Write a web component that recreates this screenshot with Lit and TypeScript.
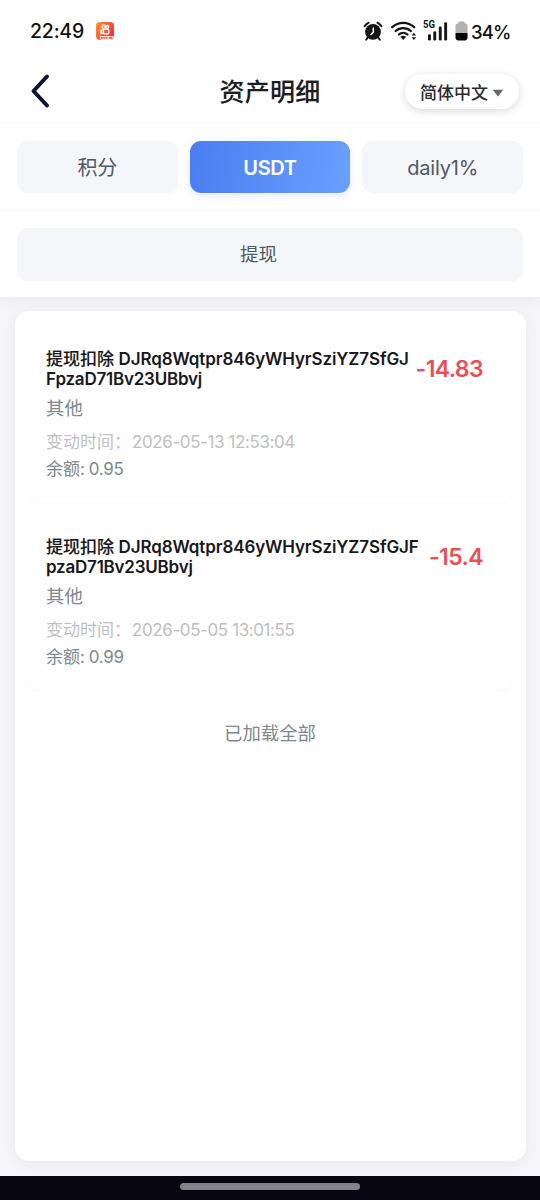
import { LitElement, html, css, svg } from "lit";
import { customElement, property, state } from "lit/decorators.js";

interface Entry {
  label: string;
  lines: string[];
  amount: string;
  kind: string;
  time: string;
  balance: string;
}

const ENTRIES: Entry[] = [
  {
    label: "提现扣除",
    lines: ["DJRq8Wqtpr846yWHyrSziYZ7SfGJ", "FpzaD71Bv23UBbvj"],
    amount: "-14.83",
    kind: "其他",
    time: "2026-05-13 12:53:04",
    balance: "0.95",
  },
  {
    label: "提现扣除",
    lines: ["DJRq8Wqtpr846yWHyrSziYZ7SfGJF", "pzaD71Bv23UBbvj"],
    amount: "-15.4",
    kind: "其他",
    time: "2026-05-05 13:01:55",
    balance: "0.99",
  },
];

@customElement("status-bar")
class StatusBar extends LitElement {
  static styles = css`
    :host { display: flex; align-items: center; height: 60px; padding: 2px 30px 0; box-sizing: border-box; color: #111; }
    .clock { font-size: 19.5px; font-weight: 500; letter-spacing: -0.2px; line-height: 24px; width: 66px; white-space: nowrap; }
    .grow { flex: 1; }
    svg { display: block; flex: none; }
    .alarm { margin-right: 8px; }
    .wifi { margin-right: 6px; }
    .signal { margin-right: 7px; }
    .battery { margin-right: 3px; }
    .pct { font-size: 18.5px; font-weight: 500; line-height: 24px; width: 39px; padding-top: 1px; white-space: nowrap; letter-spacing: -0.9px; }
    .gen { font: 700 10px "Roboto", sans-serif; }
  `;

  render() {
    return html`
      <span class="clock">22:49</span>
      <svg width="18" height="18" viewBox="0 0 18 18">
        <defs>
          <linearGradient id="app" x1="0" y1="0" x2="1" y2="0.6">
            <stop offset="0" stop-color="#ff9430" /><stop offset="1" stop-color="#f0353c" />
          </linearGradient>
        </defs>
        <rect width="18" height="18" rx="4" fill="url(#app)" />
        <g fill="none" stroke="#fff" stroke-width="1.3">
          <circle cx="7.6" cy="4.6" r="1.7" /><circle cx="11.2" cy="4.9" r="1.4" />
          <rect x="7.4" y="7.4" width="5.4" height="4.6" rx="1.4" />
          <path d="M7.2 8.6 5 7.9v3.6l2.2-.7" />
        </g>
        <path d="M4 14h13.6v1.2L15.4 18H4.6z" fill="#ffe9e2" />
        <path d="M5 16h7.4M13.6 15.2l.8 1.6 1.8-2.2" stroke="#e84a43" stroke-width="1.7" stroke-dasharray="1.7 .5" fill="none" />
      </svg>
      <span class="grow"></span>
      <svg class="alarm" width="20" height="20" viewBox="0 0 20 20">
        <circle cx="10" cy="10.8" r="7.9" fill="#151515" />
        <path d="M1.6 5.2A12 12 0 0 1 5.6 1.7M18.4 5.2a12 12 0 0 0-4-3.5" stroke="#151515" stroke-width="2" stroke-linecap="round" fill="none" />
        <path d="m4.8 16.4-1.6 2.3M15.2 16.4l1.6 2.3" stroke="#151515" stroke-width="1.9" stroke-linecap="round" />
        <path d="M10.3 6.9v4.4L8 13.5" stroke="#fff" stroke-width="1.5" stroke-linecap="round" fill="none" />
      </svg>
      <svg class="wifi" width="26" height="20" viewBox="0 0 26 20">
        <g fill="none" stroke="#151515" stroke-width="2.3" stroke-linecap="round">
          <path d="M1.2 6.2a16 16 0 0 1 22 0" /><path d="M4.6 10a11.4 11.4 0 0 1 15.2 0" /><path d="M7.9 13.5a6.6 6.6 0 0 1 8.6 0" />
        </g>
        <path d="M9.3 15.8q2.9-2 5.8 0l-2.9 3.2z" fill="#151515" />
        <path d="m20.6 14.5 2.3-2.7 2.3 2.7zM20.6 16.2l2.3 2.7 2.3-2.7z" fill="#151515" />
      </svg>
      <svg class="signal" width="25" height="22" viewBox="0 0 25 22">
        <text class="gen" x="0" y="8.4" fill="#151515" textLength="12" lengthAdjust="spacingAndGlyphs">5G</text>
        <g fill="#151515">
          <rect x="5" y="14.2" width="2.9" height="6.2" rx="1.2" /><rect x="10.3" y="11.2" width="2.9" height="9.2" rx="1.2" />
          <rect x="15.8" y="6.6" width="2.9" height="13.8" rx="1.2" /><rect x="21.2" y="2.2" width="2.9" height="18.2" rx="1.2" />
        </g>
      </svg>
      <svg class="battery" width="13" height="20" viewBox="0 0 13 20">
        <path d="M3.4 2.2V1.5Q3.4.6 4.6.6h3.8q1.2 0 1.2.9v.7q2.9 0 2.9 2.9V12H.5V5.1q0-2.9 2.9-2.9z" fill="#b1b1b1" />
        <path d="M.5 12h12v4.6q0 2.8-2.8 2.8H3.3q-2.8 0-2.8-2.8z" fill="#050505" />
      </svg>
      <span class="pct">34%</span>
    `;
  }
}

@customElement("record-item")
class RecordItem extends LitElement {
  @property({ attribute: false }) entry!: Entry;

  static styles = css`
    :host { display: block; box-sizing: border-box; height: 175px; padding: 22px 29px 22px 18px; border-radius: 12px; background: #fff; box-shadow: 0 2px 4px rgba(0, 0, 0, 0.025); white-space: nowrap; }
    .top { display: flex; justify-content: space-between; align-items: center; height: 40px; }
    .name { font-size: 17px; line-height: 20px; font-weight: 500; color: #18181c; }
    .cjk { font-weight: 500; -webkit-text-stroke: 0.1px #18181c; }
    .code { font-weight: 600; letter-spacing: -0.11px; }
    .rest { letter-spacing: -0.22px; }
    .amount { font-size: 23px; font-weight: 600; line-height: 28px; color: #e95055; letter-spacing: -0.6px; }
    .kind { margin-top: 7px; font-size: 18.4px; line-height: 24px; color: #7d898e; }
    .time { margin-top: 11px; font-size: 17px; line-height: 22px; color: #bfbfbf; }
    .date { letter-spacing: -0.4px; margin-left: 1px; }
    .balance { margin-top: 5px; font-size: 17px; line-height: 22px; color: #7d898e; }
    .sum { letter-spacing: -0.3px; margin-left: -1px; }
  `;

  render() {
    const e = this.entry;
    return html`
      <div class="top">
        <div class="name">
          <span class="cjk">${e.label}</span> <span class="code">${e.lines[0]}<br /><span class="rest">${e.lines[1]}</span></span>
        </div>
        <div class="amount">${e.amount}</div>
      </div>
      <div class="kind">${e.kind}</div>
      <div class="time">变动时间：<span class="date">${e.time}</span></div>
      <div class="balance">余额: <span class="sum">${e.balance}</span></div>
    `;
  }
}

@customElement("app-root")
class AppRoot extends LitElement {
  @state() private active = 1;
  private tabs = ["积分", "USDT", "daily1%"];

  static styles = css`
    :host { display: flex; flex-direction: column; width: 540px; height: 1200px; overflow: hidden; background: #f5f5fa; font-family: "Inter", "Noto Sans CJK SC", sans-serif; font-variant-ligatures: none; }
    .panel { background: #fff; box-shadow: 0 3px 12px rgba(20, 20, 50, 0.06); height: 297px; flex: none; }
    .header { display: grid; grid-template-columns: 135px 1fr 135px; align-items: center; height: 64px; padding: 0 0 1px; box-sizing: border-box; border-bottom: 1px solid #f6f6f6; }
    .back { display: block; margin-left: 29px; }
    .title { text-align: center; font-size: 25px; line-height: 36px; padding-top: 2px; font-weight: 500; color: #1b1c22; letter-spacing: 0.3px; -webkit-text-stroke: 0.1px #1b1c22; }
    .lang { display: flex; align-items: center; gap: 4px; width: 114px; height: 35px; margin-top: 1px; box-sizing: border-box; padding: 1px 0 0 15px; border: 0; border-radius: 18px; background: #fff; box-shadow: 0 2px 8px rgba(0, 0, 0, 0.15); font: 500 17px/24px "Noto Sans CJK SC", sans-serif; color: #292929; white-space: nowrap; }
    .tabs { display: grid; grid-template-columns: repeat(3, 1fr); gap: 12px; padding: 17px 17px; border-bottom: 1px solid #f8f8f8; }
    .tab { display: flex; align-items: center; justify-content: center; height: 52px; border: 0; border-radius: 11px; padding: 1px 0 0; background: #f5f6fa; font: 400 20px/28px "Inter", "Noto Sans CJK SC", sans-serif; color: #4c5963; letter-spacing: -0.2px; }
    .active { background: linear-gradient(100deg, #4a7df0, #6aa0ff); color: #fff; font-weight: 600; letter-spacing: -0.3px; box-shadow: 0 3px 8px rgba(74, 125, 240, 0.15); }
    .sub { padding: 17px; }
    .filter { display: flex; align-items: center; justify-content: center; height: 53px; border-radius: 11px; background: #f5f6fa; font-size: 18.5px; line-height: 26px; color: #4c5963; box-sizing: border-box; padding: 0 23px 1px 0; }
    .card { margin: 14px 14px 15px 15px; flex: 1; box-sizing: border-box; padding: 16px 14px 0 13px; border-radius: 14px; background: #fff; box-shadow: 0 3px 14px rgba(20, 20, 50, 0.055); }
    .list { display: flex; flex-direction: column; gap: 13px; }
    .end { margin-top: 29px; text-align: center; font-size: 18.4px; line-height: 28px; color: #7d898e; }
    .nav { display: flex; justify-content: center; align-items: flex-start; height: 24px; padding-top: 7px; box-sizing: border-box; background: #070612; flex: none; }
    .pill { width: 180px; height: 7px; border-radius: 4px; background: #848288; }
  `;

  render() {
    return html`
      <section class="panel">
        <status-bar></status-bar>
        <header class="header">
          <svg class="back" width="24" height="36" viewBox="0 0 24 36">
            <path d="M18 3.5 4.5 18 18 32.5" fill="none" stroke="#0e1433" stroke-width="4" stroke-linecap="round" stroke-linejoin="round" />
          </svg>
          <div class="title">资产明细</div>
          <button class="lang">
            简体中文
            <svg width="12" height="9" viewBox="0 0 12 9">${svg`<path d="M.8 1.8h10.4L6 8.4z" fill="#666" />`}</svg>
          </button>
        </header>
        <nav class="tabs">
          ${this.tabs.map(
            (t, i) => html`<button class="tab ${i === this.active ? "active" : ""}" @click=${() => (this.active = i)}>${t}</button>`
          )}
        </nav>
        <div class="sub"><div class="filter">提现</div></div>
      </section>
      <main class="card">
        <div class="list">${ENTRIES.map((e) => html`<record-item .entry=${e}></record-item>`)}</div>
        <div class="end">已加载全部</div>
      </main>
      <footer class="nav"><div class="pill"></div></footer>
    `;
  }
}
